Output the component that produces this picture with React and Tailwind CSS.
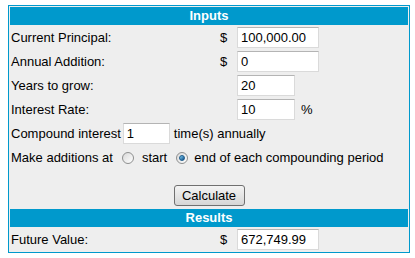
import React from "react";

const Box = ({ value, className }) => (
  <input
    type="text"
    readOnly
    value={value}
    className={`h-[21px] bg-white border border-[#dadada] border-t-[#b4b4b4] pl-[3px] text-[13px] text-black outline-none ${className}`}
  />
);

const Radio = ({ checked, className }) => (
  <span
    className={`w-[12px] h-[12px] rounded-full border border-[#8e8f8f] bg-gradient-to-br from-[#d9d9d9] to-[#ffffff] flex items-center justify-center ${className}`}
  >
    {checked && (
      <span className="w-[6px] h-[6px] rounded-full bg-gradient-to-br from-[#7fd0f5] to-[#0d4d86] border border-[#1c5a8a]" />
    )}
  </span>
);

const Row = ({ label, dollar, children }) => (
  <div className="h-[23px] flex items-center">
    <div className="w-[205px] pl-[1px]">{label}</div>
    <div className="w-[20px] pl-[5px]">{dollar ? "$" : ""}</div>
    {children}
  </div>
);

const App = () => {
  return (
    <div className="w-[415px] h-[258px] bg-white pt-[5px] pl-[8px] font-['Liberation_Sans',Arial,sans-serif] text-[13px] text-black">
      <div className="w-[402px] border border-[#0099cc] p-[1px] bg-[#eeeeee] flex flex-col gap-[1px]">
        <div className="h-[18px] bg-[#0099cc] text-white font-bold flex items-center justify-center">
          Inputs
        </div>
        <Row label="Current Principal:" dollar>
          <Box value="100,000.00" className="ml-[2px] w-[82px]" />
        </Row>
        <Row label="Annual Addition:" dollar>
          <Box value="0" className="ml-[2px] w-[82px]" />
        </Row>
        <Row label="Years to grow:">
          <Box value="20" className="ml-[2px] w-[58px]" />
        </Row>
        <Row label="Interest Rate:">
          <Box value="10" className="ml-[2px] w-[58px]" />
          <span className="ml-[6px]">%</span>
        </Row>
        <div className="h-[23px] flex items-center pl-[1px]">
          <span>Compound interest</span>
          <Box value="1" className="ml-[2px] w-[47px]" />
          <span className="ml-[4px]">time(s) annually</span>
        </div>
        <div className="h-[23px] flex items-center pl-[1px]">
          <span>Make additions at</span>
          <Radio className="ml-[9px]" />
          <span className="ml-[8px]">start</span>
          <Radio checked className="ml-[9px]" />
          <span className="ml-[6px]">end of each compounding period</span>
        </div>
        <div className="h-[38px] flex justify-center items-end pb-[2px]">
          <button
            type="button"
            className="w-[71px] h-[21px] border border-[#707070] rounded-[3px] bg-gradient-to-b from-[#f4f4f4] to-[#d6d6d6] text-[13px] text-black flex items-center justify-center"
          >
            Calculate
          </button>
        </div>
        <div className="h-[18px] bg-[#0099cc] text-white font-bold flex items-center justify-center">
          Results
        </div>
        <Row label="Future Value:" dollar>
          <Box value="672,749.99" className="ml-[2px] w-[82px]" />
        </Row>
      </div>
    </div>
  );
};

export default App;
